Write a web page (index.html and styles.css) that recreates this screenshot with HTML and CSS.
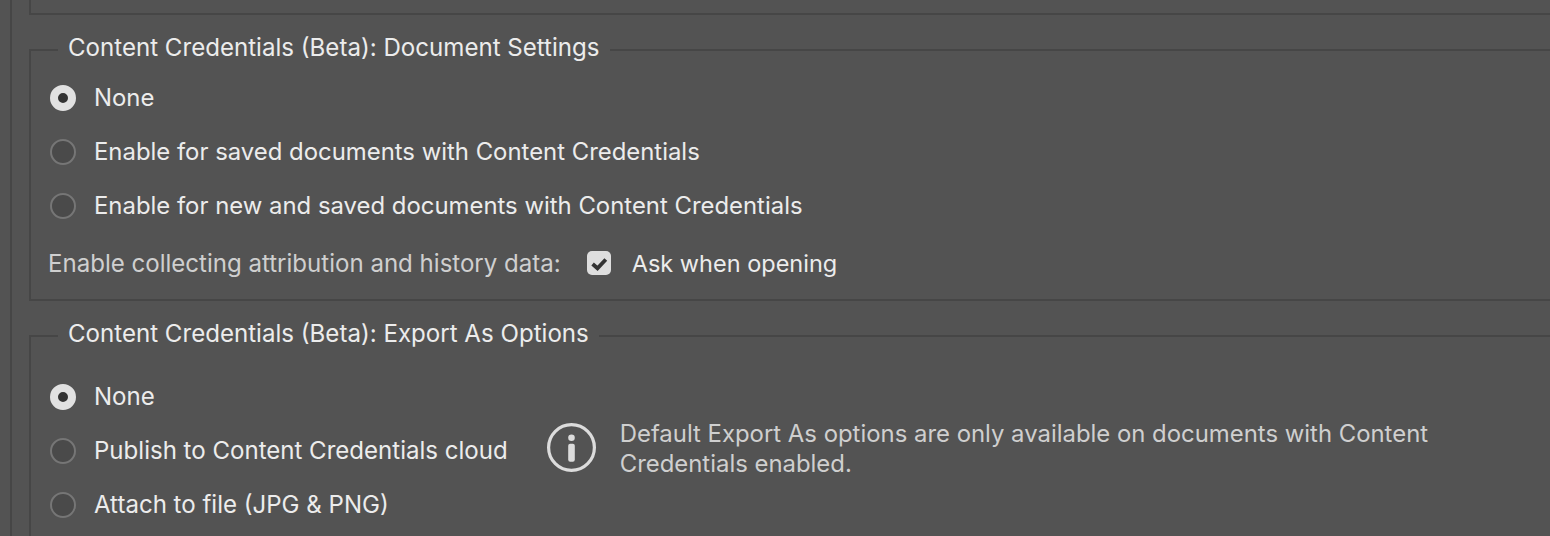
FILE: index.html
```html
<!DOCTYPE html>
<html lang="en">
<head>
<meta charset="utf-8">
<title>Content Credentials Preferences</title>
<link rel="stylesheet" href="styles.css">
</head>
<body>
<main class="page">
  <div class="prev-group"></div>

  <fieldset class="group group-doc">
    <legend class="legend">Content Credentials (Beta): Document Settings</legend>
    <div class="radio-list">
      <div class="radio-row"><span class="radio checked"></span><span class="label">None</span></div>
      <div class="radio-row"><span class="radio"></span><span class="label">Enable for saved documents with Content Credentials</span></div>
      <div class="radio-row"><span class="radio"></span><span class="label">Enable for new and saved documents with Content Credentials</span></div>
    </div>
    <div class="collect-row">
      <span class="muted collect-text">Enable collecting attribution and history data:</span>
      <span class="checkbox">
        <svg viewBox="0 0 24 24" width="24" height="24" aria-hidden="true"><path d="M5.600 13l4.900 4.300 8.300-8.800" fill="none" stroke="#333" stroke-width="3.800"/></svg>
      </span>
      <span class="label ask-label">Ask when opening</span>
    </div>
  </fieldset>

  <fieldset class="group group-export">
    <legend class="legend">Content Credentials (Beta): Export As Options</legend>
    <div class="export-body">
      <div class="radio-list">
        <div class="radio-row"><span class="radio checked"></span><span class="label">None</span></div>
        <div class="radio-row"><span class="radio"></span><span class="label">Publish to Content Credentials cloud</span></div>
        <div class="radio-row"><span class="radio"></span><span class="label">Attach to file (JPG &amp; PNG)</span></div>
      </div>
      <div class="notice">
        <svg class="info-icon" viewBox="0 0 49 49" width="49" height="49" aria-hidden="true">
          <circle cx="24.500" cy="24.500" r="22.900" fill="none" stroke="#dcdcdc" stroke-width="3.200"/>
          <circle cx="24.500" cy="14.700" r="3.300" fill="#dcdcdc"/>
          <rect x="21.200" y="20.700" width="6.600" height="18" rx="2" fill="#dcdcdc"/>
        </svg>
        <p class="muted notice-text">Default Export As options are only available on documents with Content Credentials enabled.</p>
      </div>
    </div>
  </fieldset>
</main>
</body>
</html>
```

FILE: styles.css
```css
* { box-sizing: border-box; }

html, body {
  margin: 0;
  height: 536px;
  overflow: hidden;
  background: #535353;
}

body {
  font-family: Inter, "Liberation Sans", sans-serif;
  font-size: 23.900px;
  color: #ececec;
}

.page {
  height: 536px;
  margin-left: 10px;
  padding-left: 17px;
  border-left: 2px solid #464646;
}

.prev-group {
  height: 15px;
  border-left: 2px solid #464646;
  border-bottom: 2px solid #464646;
}

.group {
  margin: 0;
  min-width: 0;
  padding: 0 0 0 19px;
  border: 2px solid #464646;
  border-right: 0;
}

.group-doc {
  margin-top: 16px;
  height: 270px;
}

.group-export {
  margin-top: 16px;
  height: 219px;
  border-bottom: 0;
}

.legend {
  margin-left: 8px;
  padding: 0 10px 4px;
  line-height: 34px;
  font-size: 24.100px;
  color: #ececec;
}

.radio-list {
  display: flex;
  flex-direction: column;
  gap: 28px;
}

.group-doc .radio-list { padding-top: 16px; }
.group-export .radio-list { padding-top: 29px; }
.group-export .label { font-size: 24.050px; }

.radio-row {
  display: flex;
  align-items: center;
  gap: 18px;
  height: 26px;
}

.radio {
  flex: none;
  width: 26px;
  height: 26px;
  border-radius: 50%;
  background: #4a4a4a;
  border: 2px solid #767676;
}

.radio.checked {
  border: 8px solid #e1e1e1;
  background: #333;
}

.label {
  white-space: nowrap;
  margin-bottom: 2px;
}

.muted { color: #cfcfcf; }

.collect-row {
  display: flex;
  align-items: center;
  height: 26px;
  margin-top: 31px;
  margin-left: -2px;
}

.collect-text {
  font-size: 24.050px;
  margin-top: 1px;
}

.ask-label {
  font-size: 23.500px;
  margin-top: 1px;
  margin-bottom: 0;
}

.checkbox {
  flex: none;
  display: flex;
  width: 24px;
  height: 24px;
  margin: 0 21px 0 26px;
  border-radius: 5px;
  background: #dedede;
}

.export-body {
  display: flex;
  align-items: flex-start;
}

.notice {
  display: flex;
  align-items: center;
  gap: 24px;
  margin: 64px 0 0 39px;
}

.info-icon {
  flex: none;
  margin-bottom: 3px;
}

.notice-text {
  width: 830px;
  margin: 0;
  line-height: 30px;
}
```
